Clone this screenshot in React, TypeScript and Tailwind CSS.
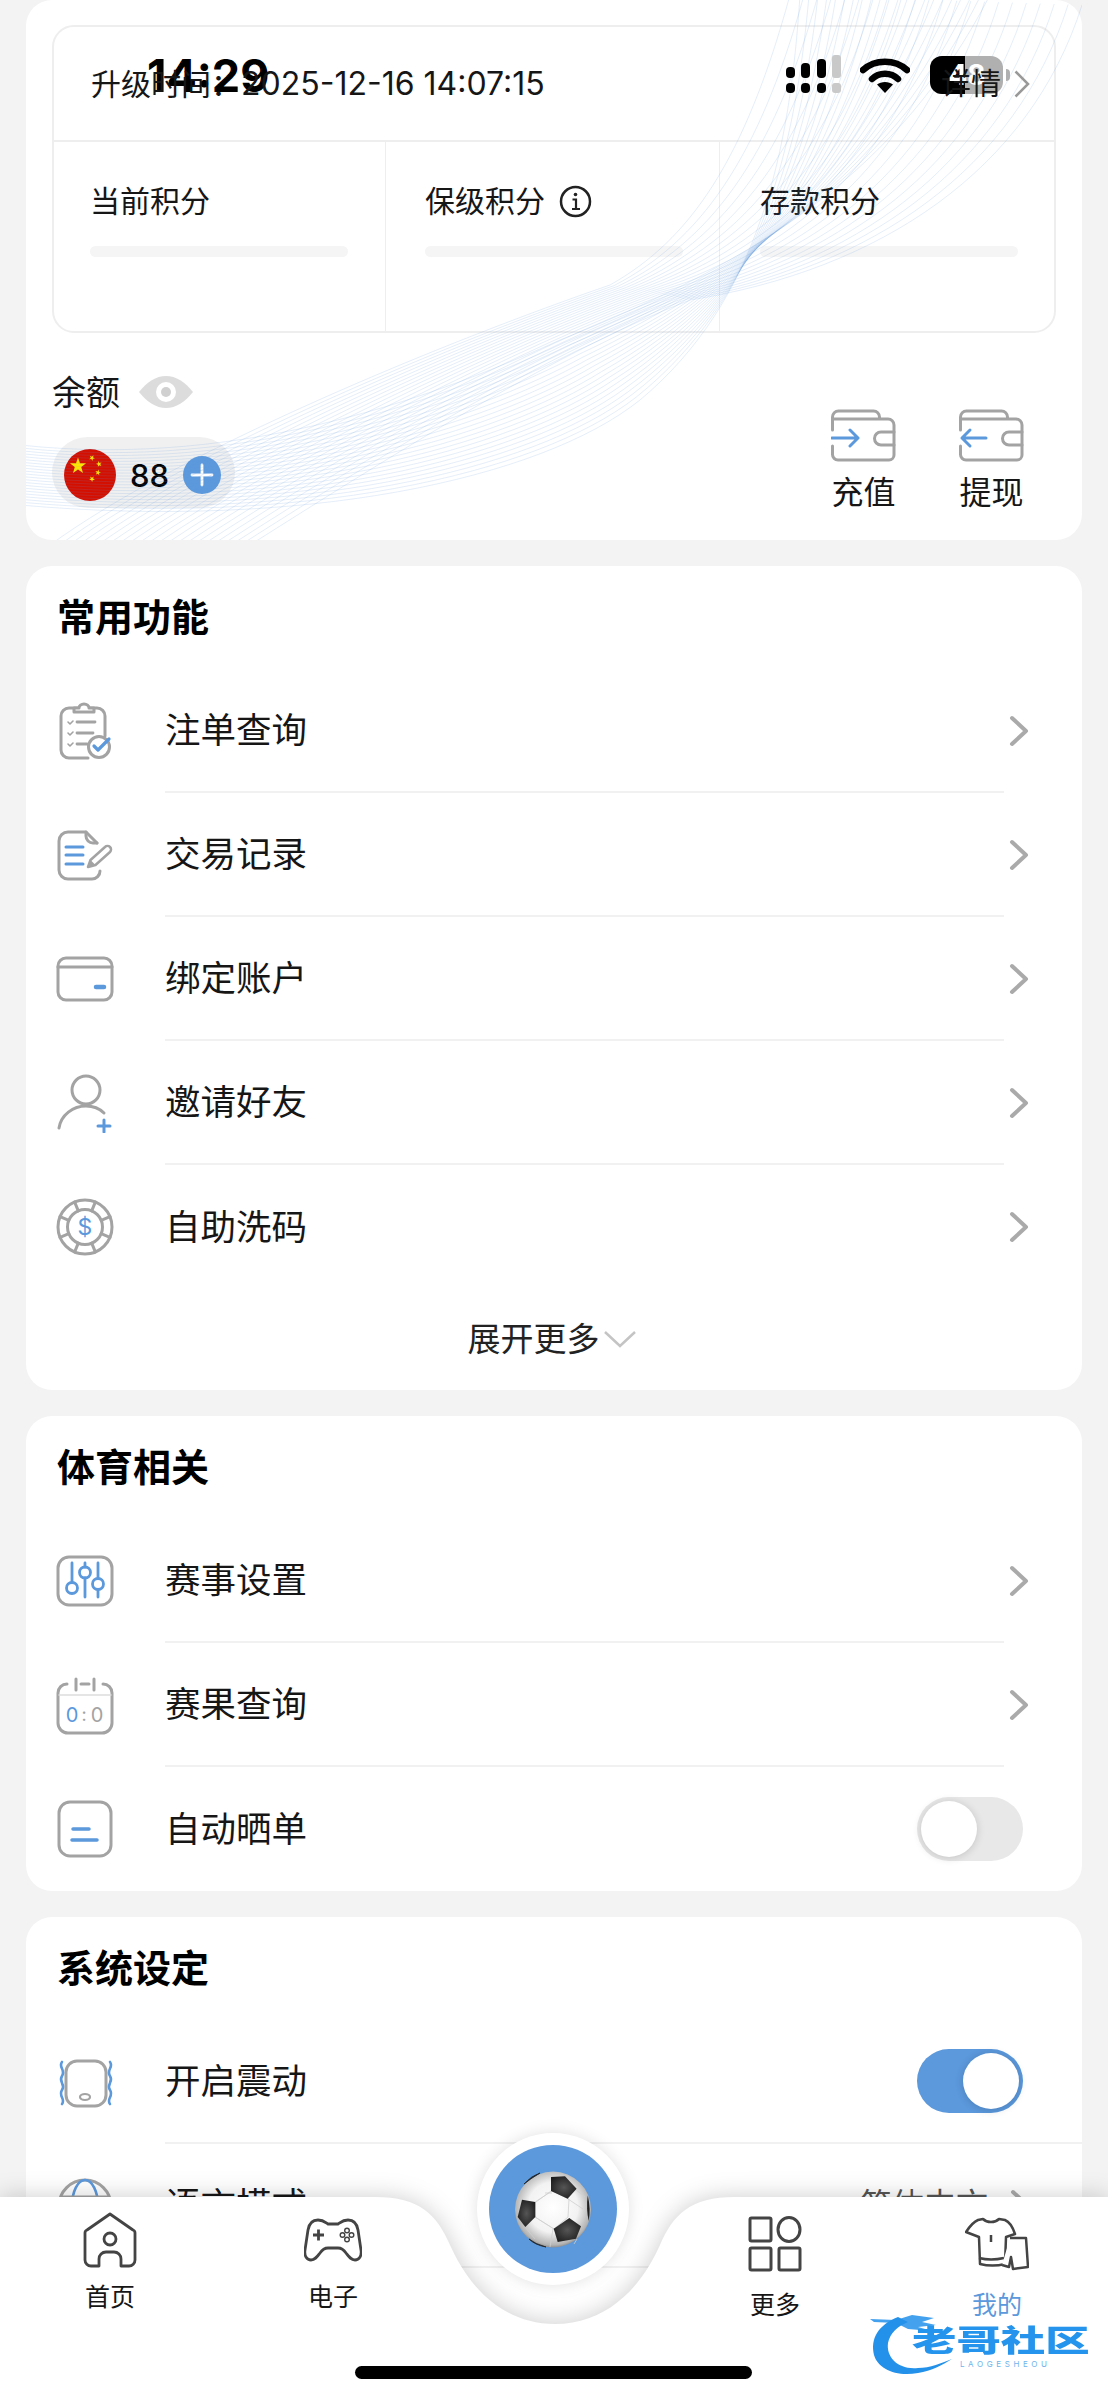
import type { ReactNode } from "react";

const GRAY = "#a3a3a3";
const BLUE = "#5b98dc";
const DARK = "#444444";

const lerp = (a: number[], b: number[], t: number) => a.map((v, i) => v + (b[i] - v) * t);

const curve = (p: number[]) =>
  `M${p[0]} ${p[1]}C${p[2]} ${p[3]} ${p[4]} ${p[5]} ${p[6]} ${p[7]}C${p[8]} ${p[9]} ${p[10]} ${p[11]} ${p[12]} ${p[13]}`;

const waveFamilies = [
  [
    [790, -5, 745, 160, 690, 240, 610, 285, 450, 340, 180, 450, 50, 545],
    [1082, 5, 1030, 170, 880, 270, 690, 300, 560, 350, 400, 450, 250, 545],
  ],
  [
    [800, -5, 790, 150, 760, 300, 640, 400, 540, 480, 300, 530, 20, 505],
    [990, -5, 900, 170, 760, 260, 560, 340, 450, 390, 250, 470, 20, 445],
  ],
];

const Waves = () => (
  <svg className="pointer-events-none absolute left-0 top-0" width="1108" height="540" viewBox="0 0 1108 540" fill="none">
    <defs>
      <clipPath id="wave-clip">
        <rect x="26" y="-30" width="1056" height="570" rx="26" />
      </clipPath>
    </defs>
    <g clipPath="url(#wave-clip)">
      {waveFamilies.map(([a, b], f) =>
        Array.from({ length: 22 }, (_, i) => (
          <path key={`${f}-${i}`} d={curve(lerp(a, b, i / 21))} stroke={BLUE} strokeOpacity="0.16" strokeWidth="1" />
        )),
      )}
    </g>
  </svg>
);

const Chevron = () => (
  <svg width="20" height="32" viewBox="0 0 20 32" fill="none">
    <path d="M3 3l14 13L3 29" stroke="#aaaaaa" strokeWidth="4" strokeLinecap="round" strokeLinejoin="round" />
  </svg>
);

const Toggle = ({ on }: { on?: boolean }) => (
  <div className={`flex h-[64px] w-[106px] items-center rounded-full px-[4px] ${on ? "justify-end bg-[#5b98dc]" : "justify-start bg-[#e8e8e8]"}`}>
    <div className="h-[56px] w-[56px] rounded-full bg-white shadow-[0_1px_8px_rgba(0,0,0,0.16)]" />
  </div>
);

const Icon = ({ children }: { children: ReactNode }) => (
  <svg width="60" height="60" viewBox="0 0 60 60" fill="none" strokeLinecap="round" strokeLinejoin="round">
    {children}
  </svg>
);

const ClipboardIcon = () => (
  <Icon>
    <path d="M33 57H14a8 8 0 0 1-8-8V15a8 8 0 0 1 8-8h28a8 8 0 0 1 8 8v20" stroke={GRAY} strokeWidth="3" />
    <path d="M19 11V7h5a5 4 0 0 1 10 0h5v4z" fill="#fff" stroke={GRAY} strokeWidth="3" />
    <path d="M22 21h18M22 32h16M22 43h10" stroke={GRAY} strokeWidth="2.8" />
    <path d="M13 21l2 2 3-3M13 32l2 2 3-3M13 43l2 2 3-3" stroke={GRAY} strokeWidth="1.6" />
    <circle cx="44" cy="46" r="10.5" fill="#fff" stroke={GRAY} strokeWidth="3" />
    <path d="M39 45l4 4 11-11" stroke={BLUE} strokeWidth="3.2" />
  </Icon>
);

const RecordIcon = () => (
  <Icon>
    <path d="M42 18L31 7H13a9 9 0 0 0-9 9v29a9 9 0 0 0 9 9h24a8 8 0 0 0 8-8" stroke={GRAY} strokeWidth="3" />
    <path d="M31 7v4a7 7 0 0 0 7 7h4" stroke={GRAY} strokeWidth="3" />
    <path d="M11 22h17M11 30h17M11 39h17" stroke={BLUE} strokeWidth="3" />
    <path d="M33 42l2.5-7L50 22a2.5 2.5 0 0 1 5 5L40.500 40z" stroke={GRAY} strokeWidth="2.5" />
    <path d="M33 42l2.500-7 5 5z" fill={GRAY} />
  </Icon>
);

const CardIcon = () => (
  <Icon>
    <rect x="3" y="9" width="54" height="42" rx="8" stroke={GRAY} strokeWidth="3" />
    <path d="M3 18h54" stroke={GRAY} strokeWidth="3" />
    <path d="M41 38h8" stroke={BLUE} strokeWidth="4.500" />
  </Icon>
);

const InviteIcon = () => (
  <Icon>
    <circle cx="31" cy="17" r="14" stroke={GRAY} strokeWidth="3" />
    <path d="M4 55c2-13 14-22 27-22 7 0 13 2 18 7" stroke={GRAY} strokeWidth="3" />
    <path d="M43 53h12M49 47v12" stroke={BLUE} strokeWidth="3" />
  </Icon>
);

const ChipIcon = () => (
  <Icon>
    <circle cx="30" cy="30" r="27" stroke={GRAY} strokeWidth="3" />
    <circle cx="30" cy="30" r="17.500" stroke={GRAY} strokeWidth="3" />
    {Array.from({ length: 8 }, (_, i) => {
      const a = (Math.PI / 4) * i + Math.PI / 8;
      return (
        <path
          key={i}
          d={`M${30 + 17.5 * Math.cos(a)} ${30 + 17.5 * Math.sin(a)}L${30 + 27 * Math.cos(a)} ${30 + 27 * Math.sin(a)}`}
          stroke={GRAY}
          strokeWidth="3"
        />
      );
    })}
    <text x="30" y="38" textAnchor="middle" fontSize="23" fill={BLUE} fontFamily="Inter, sans-serif">$</text>
  </Icon>
);

const SlidersIcon = () => (
  <Icon>
    <rect x="3" y="6" width="54" height="48" rx="11" stroke={GRAY} strokeWidth="3" />
    <path d="M17 12v19M30 12v4M30 27v19M43 12v15M43 39v7" stroke={BLUE} strokeWidth="2.8" />
    <circle cx="17" cy="37" r="5.500" stroke={BLUE} strokeWidth="2.8" />
    <circle cx="30" cy="21.500" r="5.500" stroke={BLUE} strokeWidth="2.8" />
    <circle cx="43" cy="33" r="5.500" stroke={BLUE} strokeWidth="2.8" />
  </Icon>
);

const ResultIcon = () => (
  <Icon>
    <path d="M12 9a9 9 0 0 0-9 9v30a10 10 0 0 0 10 10h34a10 10 0 0 0 10-10V18a9 9 0 0 0-9-9" stroke={GRAY} strokeWidth="3" />
    <path d="M21 4v11M39 4v11M26 9h8" stroke={GRAY} strokeWidth="3" />
    <path d="M4 20h52" stroke="#dddddd" strokeWidth="1.500" />
    <text x="17" y="47" textAnchor="middle" fontSize="20" fill={BLUE} fontFamily="Inter, sans-serif">0</text>
    <text x="29" y="46" textAnchor="middle" fontSize="18" fill={GRAY} fontFamily="Inter, sans-serif">:</text>
    <text x="42" y="47" textAnchor="middle" fontSize="20" fill={GRAY} fontFamily="Inter, sans-serif">0</text>
  </Icon>
);

const ShareIcon = () => (
  <Icon>
    <rect x="4" y="3" width="52" height="54" rx="11" stroke={GRAY} strokeWidth="3" />
    <path d="M18 30h16M17 41h25" stroke={BLUE} strokeWidth="3.500" />
  </Icon>
);

const VibrateIcon = () => (
  <Icon>
    <rect x="11" y="9" width="40" height="45" rx="11" stroke={GRAY} strokeWidth="3" />
    <ellipse cx="30" cy="45" rx="5" ry="3" stroke={GRAY} strokeWidth="2.200" />
    <path d="M7 10c-4 5 4 8 0 14s4 8 0 14 4 9 0 14" stroke={BLUE} strokeWidth="2.600" />
    <path d="M55 10c4 5-4 8 0 14s-4 8 0 14-4 9 0 14" stroke={BLUE} strokeWidth="2.600" />
  </Icon>
);

const GlobeIcon = () => (
  <Icon>
    <circle cx="30" cy="30" r="26" stroke={GRAY} strokeWidth="3" />
    <ellipse cx="30" cy="30" rx="13" ry="26" stroke={BLUE} strokeWidth="2.600" />
    <path d="M6 21h48" stroke={GRAY} strokeWidth="3" />
  </Icon>
);

const Wallet = ({ out }: { out?: boolean }) => (
  <svg width="65" height="53" viewBox="0 0 65 53" fill="none" strokeLinecap="round" strokeLinejoin="round">
    <path
      d="M1.500 21V8a6 6 0 0 1 6-6h35a6 6 0 0 1 6 6v2M1.500 10H57a6 6 0 0 1 6 6v30a5 5 0 0 1-5 5H7a5.500 5.500 0 0 1-5.500-5.500V37"
      stroke={GRAY}
      strokeWidth="3"
    />
    <path d="M63 23H50a6 6 0 0 0 0 13h13" stroke={GRAY} strokeWidth="3" />
    {out ? (
      <path d="M27 29H3M11 21l-8 8 8 8" stroke={BLUE} strokeWidth="3" />
    ) : (
      <path d="M1 29h26M19 21l8 8-8 8" stroke={BLUE} strokeWidth="3" />
    )}
  </svg>
);

const starPoints = (cx: number, cy: number, r: number, rot = 0) =>
  Array.from({ length: 10 }, (_, i) => {
    const rad = i % 2 ? r * 0.4 : r;
    const a = -Math.PI / 2 + rot + (i * Math.PI) / 5;
    return `${cx + rad * Math.cos(a)},${cy + rad * Math.sin(a)}`;
  }).join(" ");

const Flag = () => (
  <svg width="52" height="52" viewBox="0 0 52 52">
    <circle cx="26" cy="26" r="26" fill="#d40f00" />
    <polygon points={starPoints(14, 17, 8.500)} fill="#ffe600" />
    <polygon points={starPoints(28, 9, 3, 0.5)} fill="#ffe600" />
    <polygon points={starPoints(35, 15, 3, 1)} fill="#ffe600" />
    <polygon points={starPoints(34, 23.500, 3, 0.2)} fill="#ffe600" />
    <polygon points={starPoints(28, 30, 3, 0.6)} fill="#ffe600" />
  </svg>
);

const Ball = () => (
  <svg width="76" height="77" viewBox="0 0 76 77" fill="none">
    <defs>
      <radialGradient id="ball" cx="0.5" cy="0.47" r="0.55">
        <stop offset="0" stopColor="#ffffff" />
        <stop offset="0.6" stopColor="#f2f2f2" />
        <stop offset="0.9" stopColor="#b5b5b5" />
        <stop offset="1" stopColor="#7b7b7b" />
      </radialGradient>
      <radialGradient id="patch" cx="0.5" cy="0.5" r="0.6">
        <stop offset="0" stopColor="#555555" />
        <stop offset="1" stopColor="#1c1c1c" />
      </radialGradient>
    </defs>
    <circle cx="38" cy="38.500" r="38" fill="url(#ball)" />
    <path d="M36 20L21 31M53 28l15 10M20 46l19 12M38 58l-3 18M62 68l-3 5M10 56l10 12M30 22l7 0M60 18l10 8M37 20l17 8l-1 18l-14 12l-19-12l0-15z" stroke="#cfcfcf" strokeWidth="0.800" />
    <polygon points="36,6 50,5.300 61.600,17.700 52.600,27.700 36,20" fill="url(#patch)" />
    <polygon points="7,28.700 20.300,31 20.300,46 10.300,56 2.700,46" fill="url(#patch)" />
    <polygon points="54.300,47 66,55.300 61,67.700 42.700,71 38.700,57.700" fill="url(#patch)" />
    <path d="M72.700 24.300Q76 38 73.700 50Q71 38 72.700 24.300z" fill="#222222" />
    <path d="M14 68Q20 74 31 76Q20 73 14 68zM9 13Q16 5 25 2Q15 8 9 13z" fill="#222222" stroke="#222222" strokeWidth="0.800" />
  </svg>
);

interface RowProps {
  icon: ReactNode;
  label: string;
  divider?: boolean;
  toggle?: "on" | "off";
  value?: string;
}

const Row = ({ icon, label, divider = true, toggle, value }: RowProps) => (
  <div className="flex h-[124px] items-stretch">
    <div className="flex w-[139px] shrink-0 items-center pl-[29px]">{icon}</div>
    <div className={`flex flex-1 items-center justify-between text-[35.5px] text-[#161616] ${divider ? "border-b-2 border-[#f1f1f1]" : ""}`}>
      <span className="mt-[2px]">{label}</span>
      {toggle && (
        <div className="mr-[59px]">
          <Toggle on={toggle === "on"} />
        </div>
      )}
      {value && (
        <div className="flex items-center gap-[22px] pr-[52px] text-[32px] text-[#555555]">
          {value}
          <Chevron />
        </div>
      )}
    </div>
    {!toggle && !value && (
      <div className="flex w-[78px] shrink-0 items-center pl-[5px]">
        <Chevron />
      </div>
    )}
  </div>
);

const Section = ({ title, children }: { title: string; children: ReactNode }) => (
  <section className="rounded-[26px] bg-white">
    <div className="h-[103px] pl-[31px] pt-[31px] text-[38px] font-bold leading-[40px] text-black">{title}</div>
    {children}
  </section>
);

const Score = ({ label, info, className }: { label: string; info?: boolean; className: string }) => (
  <div className={`flex flex-col pt-[39px] ${className}`}>
    <div className="flex h-[40px] items-center gap-[14px] text-[30px] text-[#161616]">
      {label}
      {info && (
        <svg width="33" height="33" viewBox="0 0 33 33" fill="none">
          <circle cx="16.500" cy="16.500" r="14.500" stroke="#222222" strokeWidth="2.500" />
          <path d="M13.500 14.500h3.500v9M13 24h8" stroke="#222222" strokeWidth="2.200" />
          <circle cx="16.500" cy="9.500" r="1.800" fill="#222222" />
        </svg>
      )}
    </div>
    <div className="mt-[25px] h-[11px] w-[258px] rounded-full bg-[#f5f5f5]" />
  </div>
);

const Tab = ({ label, icon, lower, active, className }: { label: string; icon: ReactNode; lower?: boolean; active?: boolean; className: string }) => (
  <div className={`flex w-[120px] flex-col items-center ${className}`}>
    <div className={`flex items-center ${lower ? "mt-[18px] h-[58px]" : "mt-[15px] h-[56px]"}`}>{icon}</div>
    <div className={`h-[30px] text-[25px] leading-[30px] ${lower ? "mt-[17px]" : "mt-[14px]"} ${active ? "text-[#5b98dc]" : "text-[#161616]"}`}>{label}</div>
  </div>
);

const StatusBar = () => (
  <div className="absolute left-0 top-[50px] z-10 flex h-[50px] w-full items-center pl-[147px]">
    <span className="text-[45px] font-bold leading-none text-black [font-family:Inter,sans-serif]">14:29</span>
    <div className="ml-[516px] flex items-center">
      <svg width="57" height="40" viewBox="0 0 57 40" fill="#000">
        <rect x="1" y="12" width="9" height="11" rx="4" />
        <rect x="16" y="8" width="9" height="15" rx="4" />
        <rect x="32" y="4" width="9" height="19" rx="4" />
        <rect x="47" y="0" width="9" height="23" rx="3" fill="#c9c9c9" />
        <rect x="1" y="28" width="9" height="10" rx="4" />
        <rect x="16" y="28" width="9" height="10" rx="4" />
        <rect x="32" y="28" width="9" height="10" rx="4" />
        <rect x="47" y="28" width="9" height="10" rx="3" fill="#c9c9c9" />
      </svg>
      <svg className="ml-[18px]" width="50" height="38" viewBox="0 0 50 38" fill="none">
        <path d="M3 14C15 3 35 3 47 14" stroke="#000" strokeWidth="6.500" strokeLinecap="round" />
        <path d="M12 23C19 16 31 16 38 23" stroke="#000" strokeWidth="6.500" strokeLinecap="round" />
        <path d="M17 28.500C21 25 29 25 33 28.500L25 37z" fill="#000" />
      </svg>
      <div className="relative ml-[20px] flex h-[38px] w-[73px] items-center justify-center overflow-hidden rounded-[12px] bg-[#b0b0b0] text-[28px] font-bold text-white [font-family:Inter,sans-serif]">
        <div className="absolute inset-y-0 left-0 w-[35px] bg-black" />
        <span className="relative">48</span>
      </div>
      <div className="ml-[3px] h-[12px] w-[4px] rounded-r-full bg-[#b0b0b0]" />
    </div>
  </div>
);

const Watermark = () => (
  <div className="absolute left-[868px] top-[172px] h-[80px] w-[230px]">
    <svg className="absolute left-0 top-0" width="100" height="80" viewBox="0 0 100 80" fill="none">
      <path d="M30 12C10 20 2 34 6 50c4 14 22 22 44 18 14-2 24-8 34-14-10 4-22 9-34 9C30 65 18 52 20 38c2-10 10-17 20-21z" fill="#2391ea" />
      <path d="M2 14l26 1 16-5 22 3-12 4 14 3-18 2 14 4-24-2-12-6-22-1z" fill="#2391ea" opacity="0.85" />
    </svg>
    <div className="absolute left-[44px] top-[20px] origin-left scale-x-[1.48] whitespace-nowrap text-[30px] font-black leading-[30px] text-[#2494ec]">老哥社区</div>
    <div className="absolute left-[92px] top-[54px] whitespace-nowrap text-[8px] leading-[10px] tracking-[3.600px] text-[#6fb4ec] [font-family:Inter,sans-serif]">LAOGESHEOU</div>
  </div>
);

const TabBar = () => (
  <div className="absolute bottom-0 left-0 z-30 h-[267px] w-full">
    <svg className="absolute left-0 top-0 drop-shadow-[0_0_12px_rgba(0,0,0,0.2)]" width="1108" height="267" viewBox="0 2133 1108 267">
      <path d="M-20 2197H375C420 2197 437 2215 450 2245C470 2290 505 2324 555 2324C605 2324 640 2290 660 2245C673 2215 690 2197 735 2197H1128V2420H-20Z" fill="#fff" />
    </svg>
    <div className="absolute left-0 top-[64px] flex w-full">
      <Tab
        className="ml-[50px]"
        label="首页"
        icon={
          <svg width="54" height="56" viewBox="0 0 54 56" fill="none" stroke={DARK} strokeWidth="2.800" strokeLinejoin="round">
            <path d="M27 2L50 18a3 3 0 0 1 2 3V48a6 6 0 0 1-6 6H38V47a7 7 0 0 0-7-7H23a7 7 0 0 0-7 7v7H8a6 6 0 0 1-6-6V21a3 3 0 0 1 2-3Z" />
            <circle cx="27" cy="27" r="6" />
          </svg>
        }
      />
      <Tab
        className="ml-[103px]"
        label="电子"
        icon={
          <svg width="58" height="44" viewBox="0 0 58 44" fill="none" stroke={DARK} strokeWidth="2.800" strokeLinejoin="round">
            <path d="M14 2c5 0 7 2 10 4h10c3-2 5-4 10-4 6 0 9 4 10 10l3 20c1 6-2 10-6 10s-6-3-9-7c-2-3-4-5-8-5H24c-4 0-6 2-8 5-3 4-5 7-9 7s-7-4-6-10l3-20C5 6 8 2 14 2z" />
            <path d="M9 17h11M14.500 11.500v11" />
            <g strokeWidth="1.400">
              <circle cx="43" cy="12.500" r="2.300" />
              <circle cx="43" cy="21.500" r="2.300" />
              <circle cx="38.500" cy="17" r="2.300" />
              <circle cx="47.500" cy="17" r="2.300" />
            </g>
          </svg>
        }
      />
      <Tab
        className="ml-[322px]"
        lower
        label="更多"
        icon={
          <svg width="54" height="56" viewBox="0 0 54 56" fill="none" stroke={DARK} strokeWidth="3">
            <rect x="2" y="2" width="21" height="23" rx="1.500" />
            <ellipse cx="41" cy="13.500" rx="11" ry="12" />
            <rect x="2" y="32" width="21" height="22" rx="1.500" />
            <rect x="31" y="32" width="21" height="22" rx="1.500" />
          </svg>
        }
      />
      <Tab
        className="ml-[102px]"
        lower
        active
        label="我的"
        icon={
          <svg width="64" height="54" viewBox="0 0 64 54" fill="none" stroke={DARK} strokeWidth="2.500" strokeLinejoin="round">
            <path d="M18 2c4 4 12 4 16 0l6 1c5 2 8 8 10 14l-9 3-1 27c-8 2-17 2-25 0l-1-27-13-5C3 12 8 5 13 3z" />
            <path d="M14 41c8 2 16 2 25 0M26 18v7" />
            <path d="M45 21h16l2 29-15 2-2-12-2 10-7-2" fill="#fff" />
          </svg>
        }
      />
    </div>
    <Watermark />
    <div className="absolute bottom-[21px] left-[355px] h-[13px] w-[397px] rounded-full bg-black" />
  </div>
);

export default function App() {
  return (
    <div className="relative h-[2400px] w-[1108px] overflow-hidden bg-[#f3f3f3] [font-family:Inter,'Noto_Sans_CJK_SC',sans-serif]">
      <main className="flex flex-col gap-[26px] px-[26px]">
        <section className="h-[540px] rounded-[26px] bg-white px-[26px] pt-[25px]">
          <div className="h-[308px] rounded-[22px] border-2 border-[#eeeeee]">
            <div className="flex h-[115px] items-center justify-between border-b-2 border-[#eeeeee] pl-[37px] pr-[24px] text-[#161616]">
              <span className="relative z-20 text-[30px]">
                升级时间：<span className="text-[32px]">2025-12-16 14:07:15</span>
              </span>
              <div className="relative z-20 flex items-center gap-[13px] text-[30px]">
                <span>详情</span>
                <svg width="16" height="28" viewBox="0 0 16 28" fill="none">
                  <path d="M1.500 1.500L14 14 1.500 26.500" stroke="#999999" strokeWidth="2.500" />
                </svg>
              </div>
            </div>
            <div className="flex h-[189px]">
              <Score label="当前积分" className="w-[332px] border-r border-[#eeeeee] pl-[36px]" />
              <Score label="保级积分" info className="w-[334px] border-r border-[#eeeeee] pl-[39px]" />
              <Score label="存款积分" className="flex-1 pl-[40px]" />
            </div>
          </div>
          <div className="flex justify-between">
            <div>
              <div className="mt-[39px] flex h-[40px] items-center gap-[19px] text-[34px] text-[#161616]">
                余额
                <svg width="54" height="32" viewBox="0 0 54 32">
                  <path d="M0 16C8 6 17 0 27 0s19 6 27 16c-8 10-17 16-27 16S8 26 0 16z" fill="#dcdcdc" />
                  <circle cx="27" cy="16" r="10" fill="#fff" />
                  <circle cx="27" cy="16" r="5" fill="#d0d0d0" />
                </svg>
              </div>
              <div className="mt-[25px] flex h-[71px] w-[183px] items-center rounded-full bg-[#f0f0f0] pl-[12px] pt-[5px]">
                <Flag />
                <span className="ml-[14px] text-[31px] font-medium leading-none text-black">88</span>
                <svg className="ml-[14px]" width="38" height="38" viewBox="0 0 38 38" fill="none">
                  <circle cx="19" cy="19" r="19" fill={BLUE} />
                  <path d="M19 9v20M9 19h20" stroke="#fff" strokeWidth="2.800" strokeLinecap="round" />
                </svg>
              </div>
            </div>
            <div className="mr-[32px] mt-[76px] flex gap-[63px]">
              <div className="flex w-[65px] flex-col items-center gap-[11px] text-[32px] leading-[40px] text-[#161616]">
                <Wallet />
                充值
              </div>
              <div className="flex w-[65px] flex-col items-center gap-[11px] text-[32px] leading-[40px] text-[#161616]">
                <Wallet out />
                提现
              </div>
            </div>
          </div>
        </section>

        <Section title="常用功能">
          <Row icon={<ClipboardIcon />} label="注单查询" />
          <Row icon={<RecordIcon />} label="交易记录" />
          <Row icon={<CardIcon />} label="绑定账户" />
          <Row icon={<InviteIcon />} label="邀请好友" />
          <Row icon={<ChipIcon />} label="自助洗码" divider={false} />
          <div className="flex h-[101px] items-start justify-center gap-[3px] pr-[4px] pt-[30px] text-[33px] leading-[40px] text-[#222222]">
            展开更多
            <svg className="mt-[11px]" width="34" height="18" viewBox="0 0 34 18" fill="none">
              <path d="M2 2l15 14L32 2" stroke="#c4c4c4" strokeWidth="2.500" />
            </svg>
          </div>
        </Section>

        <Section title="体育相关">
          <Row icon={<SlidersIcon />} label="赛事设置" />
          <Row icon={<ResultIcon />} label="赛果查询" />
          <Row icon={<ShareIcon />} label="自动晒单" divider={false} toggle="off" />
        </Section>

        <Section title="系统设定">
          <Row icon={<VibrateIcon />} label="开启震动" toggle="on" />
          <Row icon={<GlobeIcon />} label="语言模式" value="简体中文" />
          <div className="h-[124px]" />
        </Section>
      </main>

      <Waves />
      <StatusBar />
      <TabBar />
      <div className="absolute left-[477px] top-[2133px] z-40 flex h-[152px] w-[152px] items-center justify-center rounded-full bg-white shadow-[0_0_16px_rgba(0,0,0,0.12)]">
        <div className="flex h-[128px] w-[128px] items-center justify-center rounded-full bg-[#5b98dc]">
          <Ball />
        </div>
      </div>
    </div>
  );
}
